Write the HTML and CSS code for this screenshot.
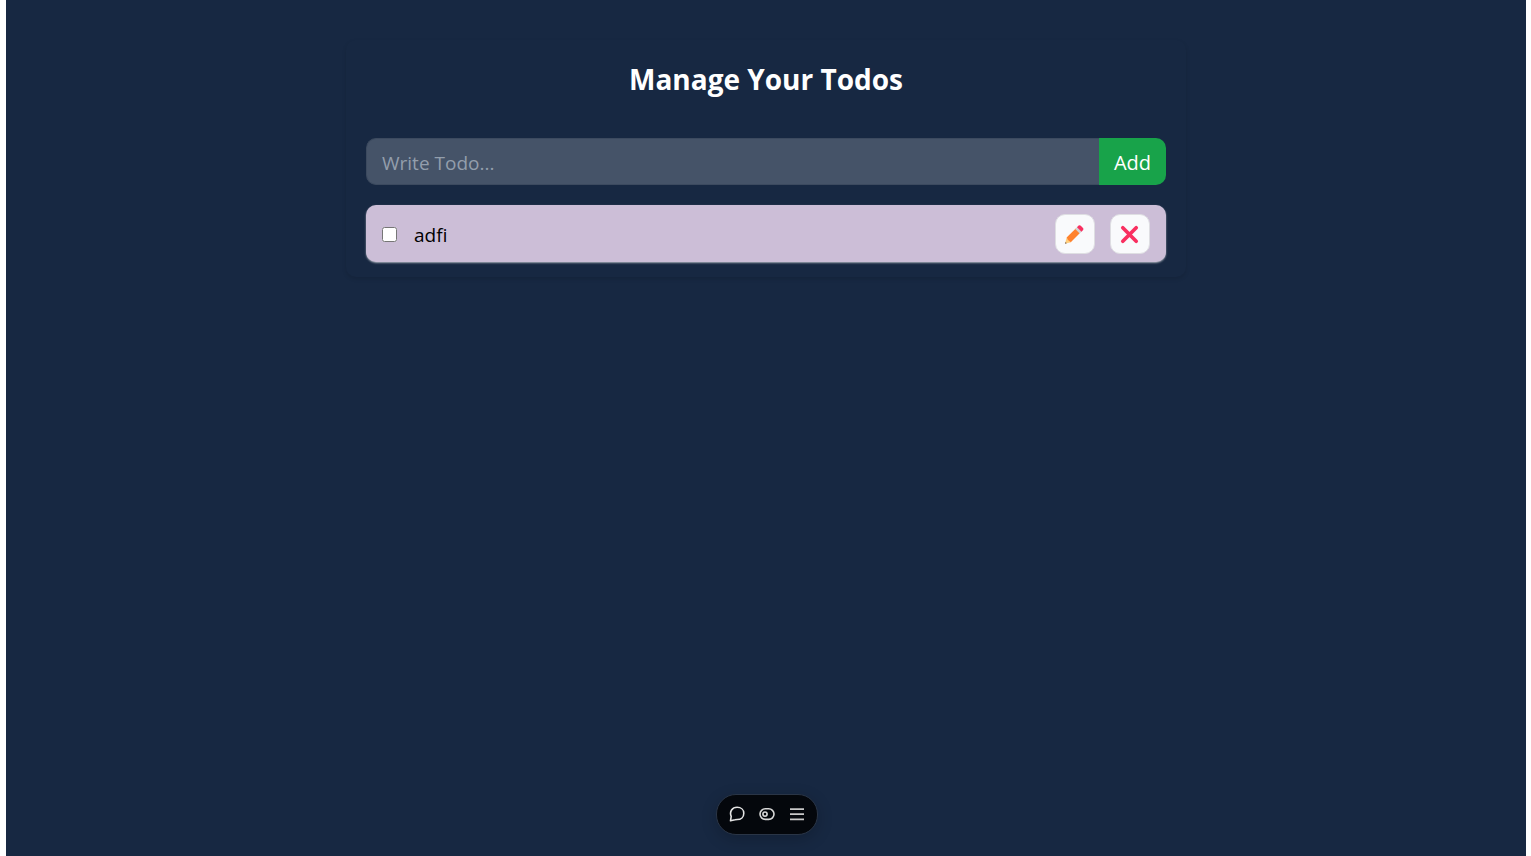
FILE: index.html
```html
<!DOCTYPE html>
<html lang="en">
<head>
<meta charset="utf-8">
<title>Manage Your Todos</title>
<link rel="stylesheet" href="styles.css">
</head>
<body>
<main class="page">
  <section class="card">
    <h1 class="title">Manage Your Todos</h1>
    <form class="todo-form">
      <input class="todo-input" type="text" placeholder="Write Todo..." aria-label="Write Todo">
      <button class="add-button" type="button">Add</button>
    </form>
    <ul class="todo-list">
      <li class="todo-item">
        <input class="todo-check" type="checkbox" id="todo-1">
        <label class="todo-text" for="todo-1">adfi</label>
        <button class="icon-button" type="button" aria-label="Edit">
          <svg width="20" height="20" viewBox="0 0 20 20">
            <path fill="#ffce7c" d="M1.600 13.800 6 18.200 0 19.700Z"/>
            <path fill="#6b5b58" d="M.5 17.900 1.800 19.200 0 19.700Z"/>
            <path fill="#ff822d" d="M10.800 4.400 15.200 8.800 5.800 18.200Q2.800 17.200 1.600 13.600Z"/>
            <path fill="#d3d3d3" d="M10.200 5 12.400 2.800 16.900 7.200 14.700 9.500Z"/>
            <path fill="#f92f60" d="M12 3.200 13.600 1.600Q14.700.7 15.800 1.700L18 3.900Q19 5 18.100 6.100L16.500 7.700Z"/>
          </svg>
        </button>
        <button class="icon-button" type="button" aria-label="Delete">
          <svg width="20" height="20" viewBox="0 0 20 20">
            <path fill="none" stroke="#f92f60" stroke-width="3.700" stroke-linecap="round" d="M2.800 3.800 16.200 17.200M16.200 3.800 2.800 17.200"/>
          </svg>
        </button>
      </li>
    </ul>
  </section>
  <nav class="toolbar" aria-label="Toolbar">
    <button class="tool" type="button" aria-label="Comment">
      <svg width="16" height="16" viewBox="0 0 16 16">
        <path fill="none" stroke="#e4e4e4" stroke-width="1.600" stroke-linejoin="round" d="M1.500 14.800 2.200 10.400C.2 5.600 3.200 1.300 8.100 1.300c4 0 6.700 2.500 6.700 5.900 0 4-2.900 6.300-6.500 6.300-.9 0-1.600.1-2.300.3Z"/>
      </svg>
    </button>
    <button class="tool" type="button" aria-label="Toggle">
      <svg width="16" height="16" viewBox="0 0 16 16">
        <rect x="1" y="2.800" width="14" height="10.600" rx="5.300" fill="none" stroke="#d8d8d8" stroke-width="1.600"/>
        <circle cx="6" cy="8.100" r="2.100" fill="none" stroke="#d8d8d8" stroke-width="1.600"/>
      </svg>
    </button>
    <button class="tool" type="button" aria-label="Menu">
      <svg width="16" height="16" viewBox="0 0 16 16">
        <path stroke="#c8c8c8" stroke-width="1.800" d="M1 3.100H15M1 8.200H15M1 13.300H15"/>
      </svg>
    </button>
  </nav>
</main>
</body>
</html>
```
FILE: styles.css
```css
* {
  box-sizing: border-box;
}

body {
  margin: 0;
  background: #fff;
  font-family: "Segoe UI", "Open Sans", "Noto Sans", sans-serif;
  font-size: 19px;
  line-height: 30px;
}

button,
input {
  font: inherit;
}

.page {
  min-height: 100vh;
  margin: 0 5px 0 6px;
  padding: 40px 20px;
  background: #172842;
}

.card {
  max-width: 840px;
  margin: 0 auto;
  padding: 19px 20px 15px;
  border-radius: 10px;
  box-shadow: 0 2px 4px rgba(0, 0, 0, 0.12);
  color: #fff;
}

.title {
  margin: 0 0 39px;
  font-size: 28px;
  line-height: 40px;
  font-weight: 700;
  text-align: center;
}

.todo-form {
  display: flex;
}

.todo-input {
  flex: 1;
  min-width: 0;
  height: 47px;
  padding: 2px 15px 0;
  border: 1px solid #3c4a5f;
  border-right: 0;
  border-radius: 10px 0 0 10px;
  outline: 0;
  background: #455368;
  color: #fff;
}

.todo-input::placeholder {
  color: #939eac;
}

.add-button {
  padding: 2px 15px 0;
  border: 0;
  border-radius: 0 10px 10px 0;
  background: #18a34a;
  color: #fff;
  font-size: 20px;
}

.todo-list {
  margin: 20px 0 0;
  padding: 0;
  list-style: none;
}

.todo-item {
  display: flex;
  align-items: center;
  gap: 15px;
  padding: 9px 16px 8px;
  border-radius: 10px;
  background: #ccbed7;
  box-shadow: 0 1px 2px rgba(255, 255, 255, 0.6);
  color: #000;
}

.todo-check {
  width: 15px;
  height: 15px;
  margin: 0 2px 0 0;
}

.todo-text {
  flex: 1;
  padding-top: 2px;
}

.icon-button {
  display: flex;
  align-items: center;
  justify-content: center;
  width: 40px;
  height: 40px;
  padding: 0;
  border: 1px solid #dedee2;
  border-radius: 10px;
  background: #f9fafc;
}

.toolbar {
  position: fixed;
  bottom: 21px;
  left: 50%;
  transform: translateX(-50%);
  display: flex;
  gap: 14px;
  margin-left: 1px;
  padding: 11px 12px;
  border: 1px solid #2a3546;
  border-radius: 20px;
  background: #04070c;
  box-shadow: 0 4px 16px rgba(0, 0, 0, 0.2);
}

.tool {
  display: flex;
  padding: 0 0 1px;
  border: 0;
  background: none;
}
```
